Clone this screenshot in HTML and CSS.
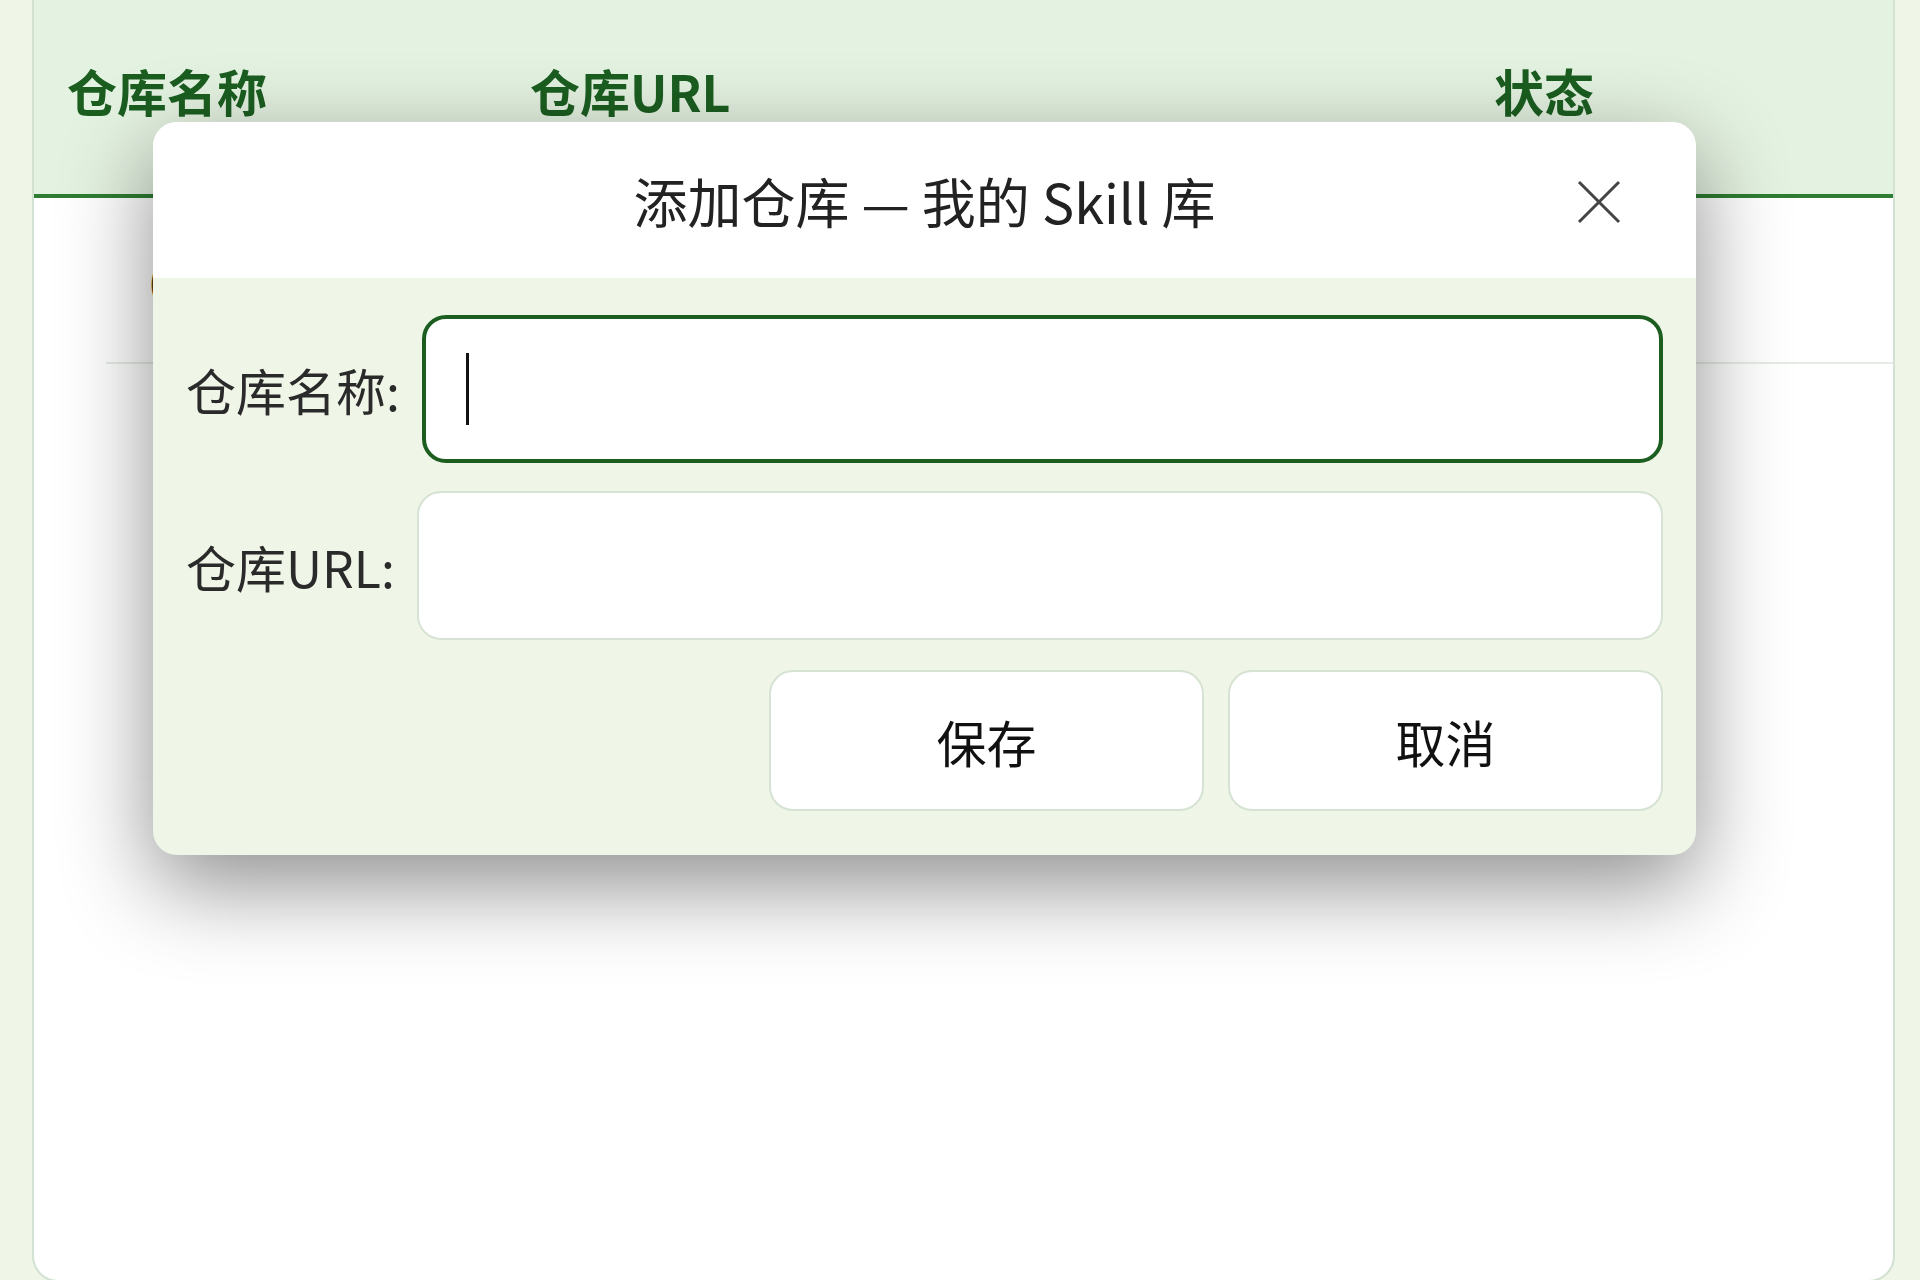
FILE: index.html
```html
<!DOCTYPE html>
<html>
<head>
    <title>仓库管理</title>
    <link rel="stylesheet" href="styles.css">
</head>
<body>
    <div class="card">
        <div class="table-head">
            <div class="th">仓库名称</div>
            <div class="th">仓库URL</div>
            <div class="th">状态</div>
        </div>
        <div class="table-row">
            <div class="td">(</div>
        </div>
    </div>

    <!-- dialog over the table -->
    <div class="dialog">
        <div class="dialog-title">
            <span>添加仓库 — 我的 Skill 库</span>
            <button class="close-btn" title="关闭">
                <svg viewBox="0 0 46 46" width="46" height="46">
                    <path d="M3 3 L43 43 M43 3 L3 43" stroke="#444" stroke-width="3" fill="none"/>
                </svg>
            </button>
        </div>
        <div class="dialog-body">
            <div class="form-row">
                <label>仓库名称:</label>
                <div class="field focused"><span class="caret"></span></div>
            </div>
            <div class="form-row">
                <label>仓库URL:</label>
                <div class="field"></div>
            </div>
            <div class="actions">
                <button class="btn">保存</button>
                <button class="btn">取消</button>
            </div>
        </div>
    </div>
</body>
</html>
```

FILE: styles.css
```css
body {
    margin: 0;
    height: 1280px;
    overflow: hidden;
    font-family: "Noto Sans CJK SC", "Noto Sans", sans-serif;
    background-color: #eff6e8;
}

.card {
    box-sizing: border-box;
    margin: -40px 25px 0 32px;
    height: 1322px;
    border: 2px solid #d2e1d2;
    border-radius: 26px;
    background-color: #ffffff;
    overflow: hidden;
}

.table-head {
    display: grid;
    grid-template-columns: 463px 964px 1fr;
    height: 232px;
    padding-left: 33px;
    background-color: #e4f2e1;
    border-bottom: 4px solid #2e7d32;
}

.th {
    padding-top: 98px;
    line-height: 60px;
    font-size: 50px;
    font-weight: 700;
    color: #1b5e20;
}

.table-row {
    display: flex;
    align-items: center;
    height: 164px;
    margin-left: 72px;
    padding-left: 42px;
    border-bottom: 2px solid #e6ede6;
}

.td {
    font-size: 40px;
    color: #5a3d12;
}

/* Dialog */
.dialog {
    position: absolute;
    left: 153px;
    top: 122px;
    width: 1543px;
    border-radius: 24px;
    overflow: hidden;
    background-color: #eff6e8;
    box-shadow: 0 30px 90px rgba(0, 0, 0, 0.45);
}

.dialog-title {
    position: relative;
    height: 156px;
    display: flex;
    align-items: center;
    justify-content: center;
    background-color: #ffffff;
    font-size: 54px;
    color: #222;
}

.close-btn {
    position: absolute;
    right: 74px;
    top: 57px;
    width: 46px;
    height: 46px;
    padding: 0;
    border: none;
    background: none;
    cursor: pointer;
}

.close-btn svg {
    display: block;
}

.dialog-body {
    padding: 37px 33px 44px 33px;
}

.form-row {
    display: flex;
    align-items: center;
    gap: 22px;
    margin-bottom: 28px;
}

.form-row label {
    font-size: 50px;
    color: #2a2a2a;
}

.field {
    box-sizing: border-box;
    flex: 1;
    height: 149px;
    display: flex;
    align-items: center;
    padding-left: 40px;
    border: 2px solid #d6e2d3;
    border-radius: 24px;
    background-color: #ffffff;
}

.field.focused {
    height: 148px;
    border: 4px solid #1b5e20;
}

.caret {
    width: 3px;
    height: 72px;
    background-color: #111;
}

.actions {
    display: flex;
    justify-content: flex-end;
    gap: 24px;
    margin-top: 30px;
}

.btn {
    width: 435px;
    height: 141px;
    font-family: "Noto Sans CJK SC", "Noto Sans", sans-serif;
    font-size: 50px;
    color: #111;
    background-color: #ffffff;
    border: 2px solid #d6e2d3;
    border-radius: 24px;
    cursor: pointer;
}
```
